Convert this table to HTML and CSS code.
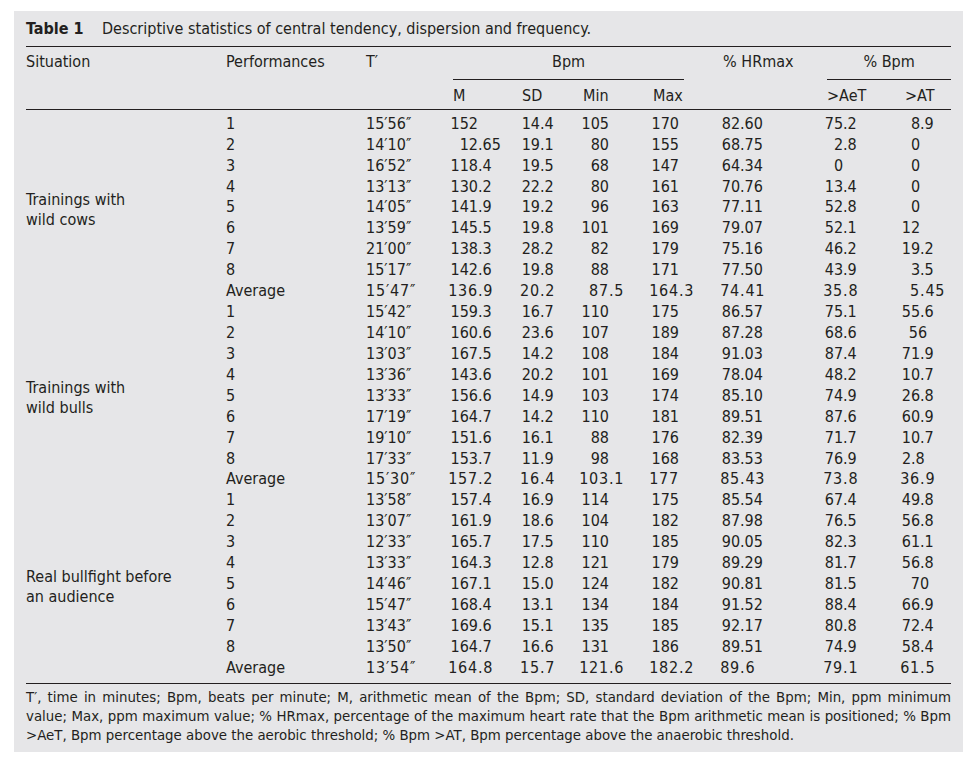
FILE: index.html
```html
<!DOCTYPE html>
<html lang="en">
<head>
<meta charset="utf-8">
<title>Table 1</title>
<link rel="stylesheet" href="styles.css">
</head>
<body>
<div class="panel">
  <div class="caption"><b>Table 1</b>Descriptive statistics of central tendency, dispersion and frequency.</div>
  <table>
    <colgroup>
      <col class="w-sit"><col class="w-perf"><col class="w-t"><col class="w-m"><col class="w-sd"><col class="w-min"><col class="w-max"><col class="w-hr"><col class="w-aet"><col class="w-at">
    </colgroup>
    <thead>
      <tr class="h1">
        <th rowspan="2">Situation</th>
        <th rowspan="2">Performances</th>
        <th rowspan="2">T′</th>
        <th colspan="4"><div class="grp bpm">Bpm</div></th>
        <th rowspan="2">% HRmax</th>
        <th colspan="2"><div class="grp">% Bpm</div></th>
      </tr>
      <tr class="h2">
        <th>M</th><th>SD</th><th>Min</th><th>Max</th><th>&gt;AeT</th><th>&gt;AT</th>
      </tr>
    </thead>
    <tbody>
      <tr><td class="lab" rowspan="9">Trainings with<br>wild cows</td><td>1</td><td>15′56″</td><td><i>152</i></td><td><i>14</i>.4</td><td><i>105</i></td><td><i>170</i></td><td><i>82</i>.60</td><td><i>75</i>.2</td><td><i>8</i>.9</td></tr>
      <tr><td>2</td><td>14′10″</td><td><i>12</i>.65</td><td><i>19</i>.1</td><td><i>80</i></td><td><i>155</i></td><td><i>68</i>.75</td><td><i>2</i>.8</td><td><i>0</i></td></tr>
      <tr><td>3</td><td>16′52″</td><td><i>118</i>.4</td><td><i>19</i>.5</td><td><i>68</i></td><td><i>147</i></td><td><i>64</i>.34</td><td><i>0</i></td><td><i>0</i></td></tr>
      <tr><td>4</td><td>13′13″</td><td><i>130</i>.2</td><td><i>22</i>.2</td><td><i>80</i></td><td><i>161</i></td><td><i>70</i>.76</td><td><i>13</i>.4</td><td><i>0</i></td></tr>
      <tr><td>5</td><td>14′05″</td><td><i>141</i>.9</td><td><i>19</i>.2</td><td><i>96</i></td><td><i>163</i></td><td><i>77</i>.11</td><td><i>52</i>.8</td><td><i>0</i></td></tr>
      <tr><td>6</td><td>13′59″</td><td><i>145</i>.5</td><td><i>19</i>.8</td><td><i>101</i></td><td><i>169</i></td><td><i>79</i>.07</td><td><i>52</i>.1</td><td><i>12</i></td></tr>
      <tr><td>7</td><td>21′00″</td><td><i>138</i>.3</td><td><i>28</i>.2</td><td><i>82</i></td><td><i>179</i></td><td><i>75</i>.16</td><td><i>46</i>.2</td><td><i>19</i>.2</td></tr>
      <tr><td>8</td><td>15′17″</td><td><i>142</i>.6</td><td><i>19</i>.8</td><td><i>88</i></td><td><i>171</i></td><td><i>77</i>.50</td><td><i>43</i>.9</td><td><i>3</i>.5</td></tr>
      <tr class="avg"><td>Average</td><td>15′47″</td><td><i>136</i>.9</td><td><i>20</i>.2</td><td><i>87</i>.5</td><td><i>164</i>.3</td><td><i>74</i>.41</td><td><i>35</i>.8</td><td><i>5</i>.45</td></tr>
    </tbody>
    <tbody>
      <tr><td class="lab" rowspan="9">Trainings with<br>wild bulls</td><td>1</td><td>15′42″</td><td><i>159</i>.3</td><td><i>16</i>.7</td><td><i>110</i></td><td><i>175</i></td><td><i>86</i>.57</td><td><i>75</i>.1</td><td><i>55</i>.6</td></tr>
      <tr><td>2</td><td>14′10″</td><td><i>160</i>.6</td><td><i>23</i>.6</td><td><i>107</i></td><td><i>189</i></td><td><i>87</i>.28</td><td><i>68</i>.6</td><td class="r1"><i>56</i></td></tr>
      <tr><td>3</td><td>13′03″</td><td><i>167</i>.5</td><td><i>14</i>.2</td><td><i>108</i></td><td><i>184</i></td><td><i>91</i>.03</td><td><i>87</i>.4</td><td><i>71</i>.9</td></tr>
      <tr><td>4</td><td>13′36″</td><td><i>143</i>.6</td><td><i>20</i>.2</td><td><i>101</i></td><td><i>169</i></td><td><i>78</i>.04</td><td><i>48</i>.2</td><td><i>10</i>.7</td></tr>
      <tr><td>5</td><td>13′33″</td><td><i>156</i>.6</td><td><i>14</i>.9</td><td><i>103</i></td><td><i>174</i></td><td><i>85</i>.10</td><td><i>74</i>.9</td><td><i>26</i>.8</td></tr>
      <tr><td>6</td><td>17′19″</td><td><i>164</i>.7</td><td><i>14</i>.2</td><td><i>110</i></td><td><i>181</i></td><td><i>89</i>.51</td><td><i>87</i>.6</td><td><i>60</i>.9</td></tr>
      <tr><td>7</td><td>19′10″</td><td><i>151</i>.6</td><td><i>16</i>.1</td><td><i>88</i></td><td><i>176</i></td><td><i>82</i>.39</td><td><i>71</i>.7</td><td><i>10</i>.7</td></tr>
      <tr><td>8</td><td>17′33″</td><td><i>153</i>.7</td><td><i>11</i>.9</td><td><i>98</i></td><td><i>168</i></td><td><i>83</i>.53</td><td><i>76</i>.9</td><td class="ra"><i>2</i>.8</td></tr>
      <tr class="avg"><td>Average</td><td>15′30″</td><td><i>157</i>.2</td><td><i>16</i>.4</td><td><i>103</i>.1</td><td><i>177</i></td><td><i>85</i>.43</td><td><i>73</i>.8</td><td><i>36</i>.9</td></tr>
    </tbody>
    <tbody>
      <tr><td class="lab" rowspan="9">Real bullfight before<br>an audience</td><td>1</td><td>13′58″</td><td><i>157</i>.4</td><td><i>16</i>.9</td><td><i>114</i></td><td><i>175</i></td><td><i>85</i>.54</td><td><i>67</i>.4</td><td><i>49</i>.8</td></tr>
      <tr><td>2</td><td>13′07″</td><td><i>161</i>.9</td><td><i>18</i>.6</td><td><i>104</i></td><td><i>182</i></td><td><i>87</i>.98</td><td><i>76</i>.5</td><td><i>56</i>.8</td></tr>
      <tr><td>3</td><td>12′33″</td><td><i>165</i>.7</td><td><i>17</i>.5</td><td><i>110</i></td><td><i>185</i></td><td><i>90</i>.05</td><td><i>82</i>.3</td><td><i>61</i>.1</td></tr>
      <tr><td>4</td><td>13′33″</td><td><i>164</i>.3</td><td><i>12</i>.8</td><td><i>121</i></td><td><i>179</i></td><td><i>89</i>.29</td><td><i>81</i>.7</td><td><i>56</i>.8</td></tr>
      <tr><td>5</td><td>14′46″</td><td><i>167</i>.1</td><td><i>15</i>.0</td><td><i>124</i></td><td><i>182</i></td><td><i>90</i>.81</td><td><i>81</i>.5</td><td class="r2"><i>70</i></td></tr>
      <tr><td>6</td><td>15′47″</td><td><i>168</i>.4</td><td><i>13</i>.1</td><td><i>134</i></td><td><i>184</i></td><td><i>91</i>.52</td><td><i>88</i>.4</td><td><i>66</i>.9</td></tr>
      <tr><td>7</td><td>13′43″</td><td><i>169</i>.6</td><td><i>15</i>.1</td><td><i>135</i></td><td><i>185</i></td><td><i>92</i>.17</td><td><i>80</i>.8</td><td><i>72</i>.4</td></tr>
      <tr><td>8</td><td>13′50″</td><td><i>164</i>.7</td><td><i>16</i>.6</td><td><i>131</i></td><td><i>186</i></td><td><i>89</i>.51</td><td><i>74</i>.9</td><td><i>58</i>.4</td></tr>
      <tr class="avg"><td>Average</td><td>13′54″</td><td><i>164</i>.8</td><td><i>15</i>.7</td><td><i>121</i>.6</td><td><i>182</i>.2</td><td><i>89</i>.6</td><td><i>79</i>.1</td><td><i>61</i>.5</td></tr>
    </tbody>
  </table>
  <div class="notes">
    <span class="j">T′, time in minutes; Bpm, beats per minute; M, arithmetic mean of the Bpm; SD, standard deviation of the Bpm; Min, ppm minimum</span>
    <span class="j">value; Max, ppm maximum value; % HRmax, percentage of the maximum heart rate that the Bpm arithmetic mean is positioned; % Bpm</span>
    <span>&gt;AeT, Bpm percentage above the aerobic threshold; % Bpm &gt;AT, Bpm percentage above the anaerobic threshold.</span>
  </div>
</div>
</body>
</html>
```
FILE: styles.css
```css
html, body {
  margin: 0;
  background: #ffffff;
}
body {
  font-family: "DejaVu Sans Condensed", "DejaVu Sans", sans-serif;
  font-size: 16px;
  color: #231f20;
}
.panel {
  margin: 11px 0 0 14px;
  width: 949px;
  height: 741px;
  box-sizing: border-box;
  padding: 8px 12px 0;
  background: #e6e6e8;
}
.caption {
  line-height: 20.92px;
  padding-bottom: 6px;
  border-bottom: 1px solid #231f20;
  white-space: nowrap;
}
.caption b {
  display: inline-block;
  width: 76px;
}
table {
  width: 925px;
  table-layout: fixed;
  border-collapse: collapse;
  border-spacing: 0;
}
.w-sit { width: 200px; }
.w-perf { width: 140px; }
.w-t { width: 87px; }
.w-m { width: 69px; }
.w-sd { width: 61px; }
.w-min { width: 70px; }
.w-max { width: 70px; }
.w-hr { width: 104px; }
.w-aet { width: 78px; }
.w-at { width: 46px; }
th, td {
  padding: 0;
  text-align: left;
  font-weight: normal;
  line-height: 20.92px;
  white-space: nowrap;
  vertical-align: top;
}
thead {
  border-bottom: 1px solid #231f20;
}
.h1 th {
  padding-top: 5px;
}
.h2 th {
  padding-top: 6px;
  padding-bottom: 2px;
}
.grp {
  padding-bottom: 6px;
  border-bottom: 1px solid #231f20;
  text-align: center;
}
.bpm {
  margin-right: 39px;
}
tbody:first-of-type tr:first-child td {
  padding-top: 4px;
}
tbody:last-of-type tr:last-child td {
  padding-bottom: 4px;
}
td.lab {
  vertical-align: middle;
  line-height: 20px;
  padding-top: 4px;
}
tbody:first-of-type tr:first-child td.lab {
  padding-top: 8px;
}
tbody:last-of-type td.lab {
  padding-bottom: 4px;
}
td i {
  display: inline-block;
  font-style: normal;
  text-align: right;
  margin-left: -6px;
}
td:nth-last-child(7) i { width: 31px; }
td:nth-last-child(6) i { width: 24px; }
td:nth-last-child(5) i { width: 32px; }
td:nth-last-child(4) i { width: 32px; }
td:nth-last-child(3) i { width: 23px; }
td:nth-last-child(2) i { width: 22px; }
td:nth-last-child(1) i { width: 21px; }
td.ra i { width: 12px; }
td.r1 i { width: 28px; }
td.r2 i { width: 30px; }
.avg td + td {
  letter-spacing: 0.8px;
}
.notes {
  border-top: 1px solid #231f20;
  padding-top: 4px;
  line-height: 19px;
  font-size: 14.85px;
}
.notes span {
  display: block;
  white-space: nowrap;
}
.notes .j {
  text-align: justify;
  text-align-last: justify;
}
```
